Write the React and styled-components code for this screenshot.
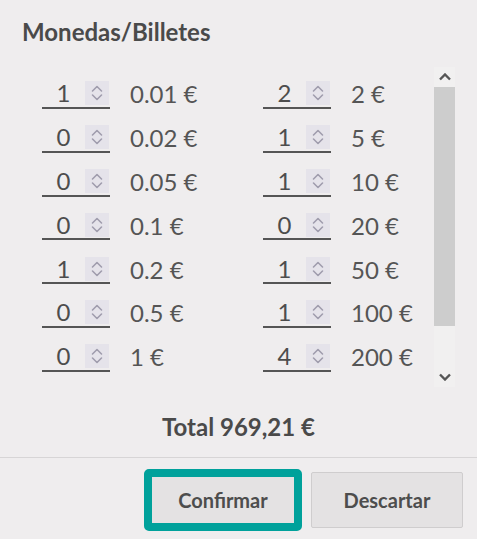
import React, { useState } from "react";
import styled, { createGlobalStyle } from "styled-components";

const GlobalStyle = createGlobalStyle`
  html, body {
    margin: 0;
    padding: 0;
    background: #efedee;
  }
  body {
    font-family: Lato, "Open Sans", sans-serif;
    color: #4a4a4a;
  }
`;

const Panel = styled.div`
  width: 477px;
  height: 539px;
  display: flex;
  flex-direction: column;
  box-sizing: border-box;
`;

const Title = styled.h2`
  margin: 0;
  padding: 20px 22px 0;
  font-size: 24px;
  line-height: 24px;
  font-weight: 700;
  color: #4a4a4a;
`;

const ListArea = styled.div`
  margin-top: 23px;
  height: 320px;
  display: flex;
  padding-right: 22px;
`;

const Grid = styled.div`
  flex: 1;
  overflow: hidden;
  padding: 5.6px 0 0 42px;
  display: grid;
  grid-template-columns: 221px 1fr;
  grid-template-rows: repeat(7, 43.8px);
  grid-auto-flow: column;
  align-content: start;
`;

const Row = styled.div`
  display: flex;
  align-items: center;
`;

const Field = styled.div`
  width: 68px;
  height: 29px;
  box-sizing: border-box;
  border-bottom: 2px solid #555;
  display: flex;
  align-items: center;
`;

const Count = styled.span`
  flex: 1;
  text-align: center;
  font-size: 24px;
  line-height: 24px;
  color: #4d4d4d;
`;

const Spinner = styled.div`
  width: 24px;
  height: 24px;
  margin-right: 1px;
  background: #e5e3ea;
  display: flex;
  align-items: center;
  justify-content: center;
`;

const Label = styled.span`
  margin-left: 20px;
  font-size: 24px;
  line-height: 24px;
  color: #555;
  white-space: nowrap;
`;

const Scrollbar = styled.div`
  width: 21px;
  display: flex;
  flex-direction: column;
  background: #f1f0f0;
`;

const ScrollButton = styled.div`
  height: 20px;
  display: flex;
  align-items: center;
  justify-content: center;
`;

const Thumb = styled.div`
  height: 239px;
  background: #cdcdcd;
`;

const Track = styled.div`
  flex: 1;
`;

const Total = styled.div`
  margin-top: 27.7px;
  text-align: center;
  font-size: 24px;
  line-height: 24px;
  font-weight: 700;
  color: #4a4a4a;
`;

const Divider = styled.hr`
  margin: 18px 0 0;
  border: 0;
  border-top: 1px solid #d7d5d6;
`;

const Footer = styled.div`
  display: flex;
  justify-content: flex-end;
  gap: 12px;
  padding: 14px 14px 0 0;
`;

const Button = styled.button`
  width: 152px;
  height: 56px;
  box-sizing: border-box;
  background: #e4e2e3;
  border: 1px solid #cfcdce;
  border-radius: 2px;
  font-family: Lato, sans-serif;
  font-size: 20px;
  font-weight: 700;
  color: #4d4d4d;
  cursor: pointer;
  outline: ${(p) => (p.$focused ? "8px solid #00a19b" : "none")};
  outline-offset: -5px;
`;

const coins = [
  [1, "0.01"],
  [0, "0.02"],
  [0, "0.05"],
  [0, "0.1"],
  [1, "0.2"],
  [0, "0.5"],
  [0, "1"],
  [2, "2"],
  [1, "5"],
  [1, "10"],
  [0, "20"],
  [1, "50"],
  [1, "100"],
  [4, "200"],
];

function SpinIcon() {
  return (
    <svg width="24" height="24" viewBox="0 0 24 24" fill="none">
      <path
        d="M7.5 10 L12 5.5 L16.5 10"
        stroke="#a09dad"
        strokeWidth="1.6"
        strokeLinecap="round"
        strokeLinejoin="round"
      />
      <path
        d="M7.5 14 L12 18.5 L16.5 14"
        stroke="#a09dad"
        strokeWidth="1.6"
        strokeLinecap="round"
        strokeLinejoin="round"
      />
    </svg>
  );
}

function Arrow({ down }) {
  return (
    <svg width="12" height="8" viewBox="0 0 12 8" fill="none">
      <path
        d={down ? "M1 1.5 L6 6.5 L11 1.5" : "M1 6.5 L6 1.5 L11 6.5"}
        stroke="#555"
        strokeWidth="2.4"
      />
    </svg>
  );
}

export default function App() {
  const [items] = useState(coins);
  return (
    <>
      <GlobalStyle />
      <Panel>
        <Title>Monedas/Billetes</Title>
        <ListArea>
          <Grid>
            {items.map(([n, v]) => (
              <Row key={v}>
                <Field>
                  <Count>{n}</Count>
                  <Spinner>
                    <SpinIcon />
                  </Spinner>
                </Field>
                <Label>{v}&nbsp;€</Label>
              </Row>
            ))}
          </Grid>
          <Scrollbar>
            <ScrollButton>
              <Arrow />
            </ScrollButton>
            <Thumb />
            <Track />
            <ScrollButton>
              <Arrow down />
            </ScrollButton>
          </Scrollbar>
        </ListArea>
        <Total>Total 969,21&nbsp;€</Total>
        <Divider />
        <Footer>
          <Button $focused>Confirmar</Button>
          <Button>Descartar</Button>
        </Footer>
      </Panel>
    </>
  );
}
